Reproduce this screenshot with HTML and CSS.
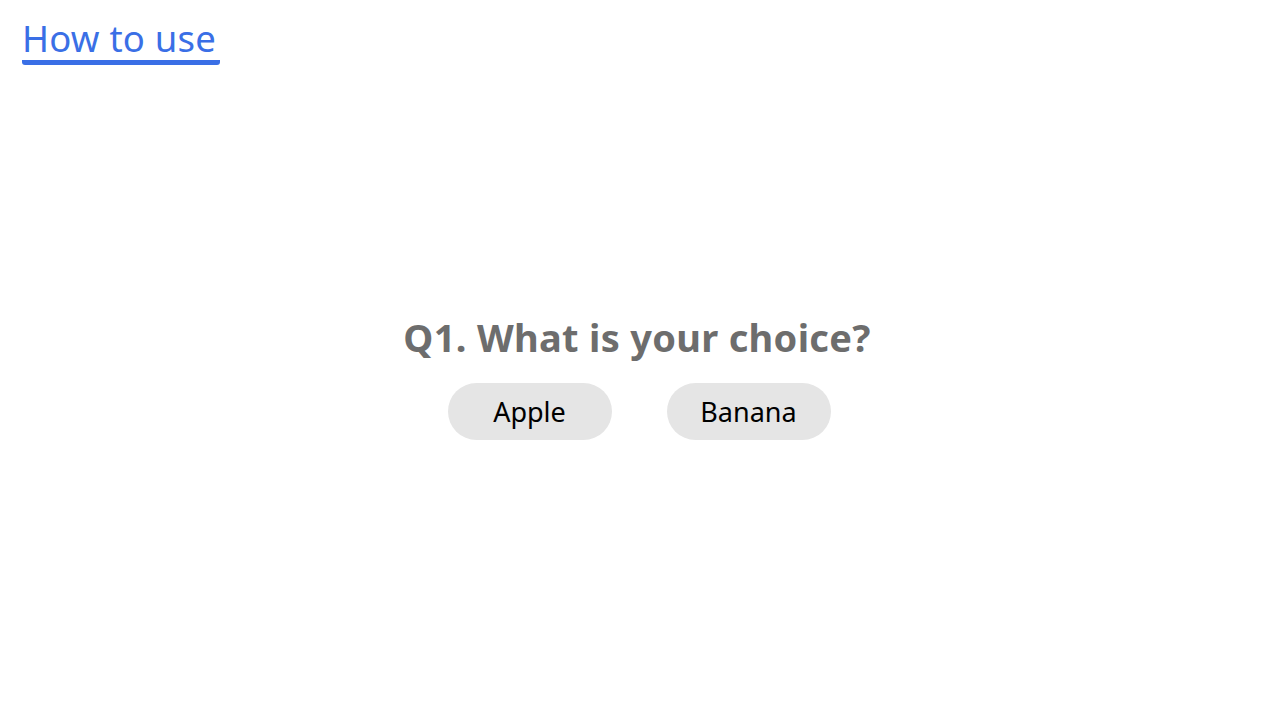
FILE: index.html
```html
<!DOCTYPE html>
<html lang="en">
<head>
<meta charset="utf-8">
<title>How to use</title>
<link rel="stylesheet" href="styles.css">
</head>
<body>
<header class="top">
  <a class="howto" href="#">How to use</a>
</header>
<main class="quiz">
  <h1 class="question">Q1. What is your choice?</h1>
  <div class="choices">
    <button class="choice">Apple</button>
    <button class="choice">Banana</button>
  </div>
</main>
</body>
</html>
```
FILE: styles.css
```css
html, body {
  margin: 0;
  padding: 0;
  background: #ffffff;
  font-family: "Noto Sans", "Open Sans", sans-serif;
}
body {
  width: 1280px;
  height: 720px;
  overflow: hidden;
}
.top {
  padding: 16px 0 0 22px;
  height: 70px;
  box-sizing: border-box;
}
.howto {
  display: inline-block;
  color: #3a6fe6;
  text-decoration: none;
  font-size: 36.5px;
  font-weight: 400;
  line-height: 44px;
  padding-right: 4px;
  border-bottom: 5px solid #3a6fe6;
  border-radius: 0 0 3px 3px;
  letter-spacing: 0.2px;
}
.quiz {
  display: flex;
  flex-direction: column;
  align-items: center;
  padding-top: 241px;
}
.question {
  margin: 0 6px 0 0;
  color: #6d6d6d;
  font-size: 38px;
  font-weight: 700;
  line-height: 52px;
  letter-spacing: 0.3px;
}
.choices {
  display: flex;
  gap: 55px;
  margin: 20px 2px 0 0;
}
.choice {
  width: 164px;
  height: 57px;
  border: none;
  border-radius: 29px;
  background: #e5e5e5;
  color: #000;
  font-family: "Noto Sans", "Open Sans", sans-serif;
  font-size: 27px;
  padding: 0;
}
```
